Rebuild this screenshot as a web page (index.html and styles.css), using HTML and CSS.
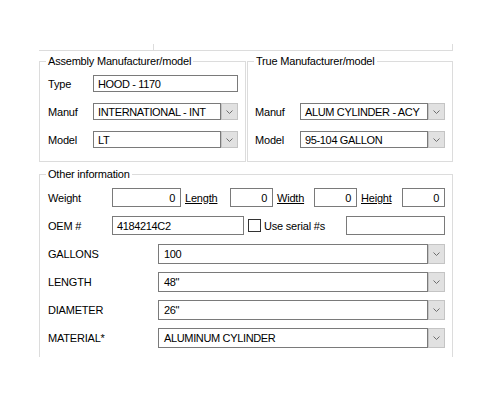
FILE: index.html
```html
<!DOCTYPE html>
<html lang="en">
<head>
<meta charset="utf-8">
<title>Assembly details</title>
<link rel="stylesheet" href="styles.css">
</head>
<body>
<div class="form">
  <div class="strip"><div class="strip-a"></div><div class="strip-b"></div></div>

  <div class="groups">
    <fieldset class="group group-asm">
      <legend>Assembly Manufacturer/model</legend>
      <div class="body body-asm">
        <div class="row">
          <span class="lbl">Type</span>
          <div class="field">HOOD - 1170</div>
        </div>
        <div class="row">
          <span class="lbl">Manuf</span>
          <div class="combo">
            <div class="field">INTERNATIONAL - INT</div>
            <div class="drop"><svg width="7" height="4" viewBox="0 0 7 4"><polyline points="0.5,0.5 3.5,3.5 6.5,0.5" fill="none" stroke="#6e6e6e" stroke-width="1"/></svg></div>
          </div>
        </div>
        <div class="row">
          <span class="lbl">Model</span>
          <div class="combo">
            <div class="field">LT</div>
            <div class="drop"><svg width="7" height="4" viewBox="0 0 7 4"><polyline points="0.5,0.5 3.5,3.5 6.5,0.5" fill="none" stroke="#6e6e6e" stroke-width="1"/></svg></div>
          </div>
        </div>
      </div>
    </fieldset>

    <fieldset class="group group-true">
      <legend>True Manufacturer/model</legend>
      <div class="body body-true">
        <div class="row"></div>
        <div class="row">
          <span class="lbl">Manuf</span>
          <div class="combo">
            <div class="field">ALUM CYLINDER - ACY</div>
            <div class="drop"><svg width="7" height="4" viewBox="0 0 7 4"><polyline points="0.5,0.5 3.5,3.5 6.5,0.5" fill="none" stroke="#6e6e6e" stroke-width="1"/></svg></div>
          </div>
        </div>
        <div class="row">
          <span class="lbl">Model</span>
          <div class="combo">
            <div class="field">95-104 GALLON</div>
            <div class="drop"><svg width="7" height="4" viewBox="0 0 7 4"><polyline points="0.5,0.5 3.5,3.5 6.5,0.5" fill="none" stroke="#6e6e6e" stroke-width="1"/></svg></div>
          </div>
        </div>
      </div>
    </fieldset>
  </div>

  <fieldset class="group group-other">
    <legend>Other information</legend>
    <div class="body body-other">
      <div class="row-size">
        <span class="lbl">Weight</span>
        <div class="field num">0</div>
        <span class="lbl ul pad">Length</span>
        <div class="field num">0</div>
        <span class="lbl ul pad">Width</span>
        <div class="field num">0</div>
        <span class="lbl ul pad">Height</span>
        <div class="field num">0</div>
      </div>
      <div class="row-oem">
        <span class="lbl">OEM #</span>
        <div class="field">4184214C2</div>
        <label class="serial"><span class="check"></span>Use serial #s</label>
        <div class="field"></div>
      </div>
      <div class="row-sel">
        <span class="lbl">GALLONS</span>
        <div class="combo">
          <div class="field">100</div>
          <div class="drop"><svg width="7" height="4" viewBox="0 0 7 4"><polyline points="0.5,0.5 3.5,3.5 6.5,0.5" fill="none" stroke="#6e6e6e" stroke-width="1"/></svg></div>
        </div>
      </div>
      <div class="row-sel">
        <span class="lbl">LENGTH</span>
        <div class="combo">
          <div class="field">48"</div>
          <div class="drop"><svg width="7" height="4" viewBox="0 0 7 4"><polyline points="0.5,0.5 3.5,3.5 6.5,0.5" fill="none" stroke="#6e6e6e" stroke-width="1"/></svg></div>
        </div>
      </div>
      <div class="row-sel">
        <span class="lbl">DIAMETER</span>
        <div class="combo">
          <div class="field">26"</div>
          <div class="drop"><svg width="7" height="4" viewBox="0 0 7 4"><polyline points="0.5,0.5 3.5,3.5 6.5,0.5" fill="none" stroke="#6e6e6e" stroke-width="1"/></svg></div>
        </div>
      </div>
      <div class="row-sel">
        <span class="lbl">MATERIAL*</span>
        <div class="combo">
          <div class="field">ALUMINUM CYLINDER</div>
          <div class="drop"><svg width="7" height="4" viewBox="0 0 7 4"><polyline points="0.5,0.5 3.5,3.5 6.5,0.5" fill="none" stroke="#6e6e6e" stroke-width="1"/></svg></div>
        </div>
      </div>
    </div>
  </fieldset>
</div>
</body>
</html>
```

FILE: styles.css
```css
body {
  margin: 0;
  background: #fff;
  color: #000;
  font: 11px "Liberation Sans", Arial, sans-serif;
  letter-spacing: -0.2px;
}

.form {
  width: 414px;
  margin-left: 39px;
}

/* bottom edge of the panel above */
.strip {
  display: flex;
  height: 6px;
  margin-top: 44px;
  border-bottom: 1px solid #dcdcdc;
}
.strip-a { width: 114px; }
.strip-b {
  flex: 1;
  border-left: 1px solid #dcdcdc;
  border-right: 1px solid #dcdcdc;
}

.groups {
  display: flex;
  gap: 1px;
  margin-top: 4px;
}

.group {
  margin: 0;
  padding: 0;
  min-width: 0;
  box-sizing: border-box;
  border: 1px solid #dcdcdc;
}
.group legend {
  margin-left: 6px;
  padding: 0 2px;
  line-height: 13px;
}

.group-asm { width: 207px; }
.group-true { width: 206px; }

.body {
  display: flex;
  flex-direction: column;
  gap: 11px;
  padding: 7px 7px 13px 8px;
}
.body-true { padding-left: 7px; }

.row {
  display: grid;
  grid-template-columns: 45px 145px;
  align-items: center;
  height: 17px;
}

.lbl { white-space: nowrap; }
.ul { text-decoration: underline; }
.pad { padding-left: 4px; }

.field {
  box-sizing: border-box;
  height: 100%;
  border: 1px solid #7a7a7a;
  background: #fff;
  padding: 0 4px;
  white-space: nowrap;
  overflow: hidden;
  display: flex;
  align-items: center;
  letter-spacing: -0.35px;
}
.num {
  justify-content: flex-end;
  padding-right: 5px;
}

.combo {
  display: flex;
  height: 100%;
}
.combo .field { flex: 1; }
.drop {
  width: 17px;
  box-sizing: border-box;
  border: 1px solid #c4c4c4;
  background: #e1e1e1;
  display: flex;
  align-items: center;
  justify-content: center;
}

/* Other information */
.group-other {
  width: 414px;
  margin-top: 6px;
  border-bottom: none;
}
.body-other {
  gap: 8px;
  padding: 7px 7px 9px 8px;
}
.row-size {
  display: grid;
  grid-template-columns: 64px 69px 49px 43px 41px 43px 45px 43px;
  align-items: center;
  height: 19px;
}
.row-oem {
  display: grid;
  grid-template-columns: 64px 132px 1fr 99px;
  align-items: center;
  height: 19px;
  margin-top: 1px;
}
.row-oem + .row-sel { margin-top: 1px; }
.serial {
  display: flex;
  align-items: center;
  gap: 3px;
  padding-left: 4px;
  white-space: nowrap;
}
.check {
  width: 13px;
  height: 13px;
  box-sizing: border-box;
  border: 1px solid #333;
  background: #fff;
}
.row-sel {
  display: grid;
  grid-template-columns: 110px 287px;
  align-items: center;
  height: 20px;
}
.row-sel .field { padding-left: 5px; }
```
